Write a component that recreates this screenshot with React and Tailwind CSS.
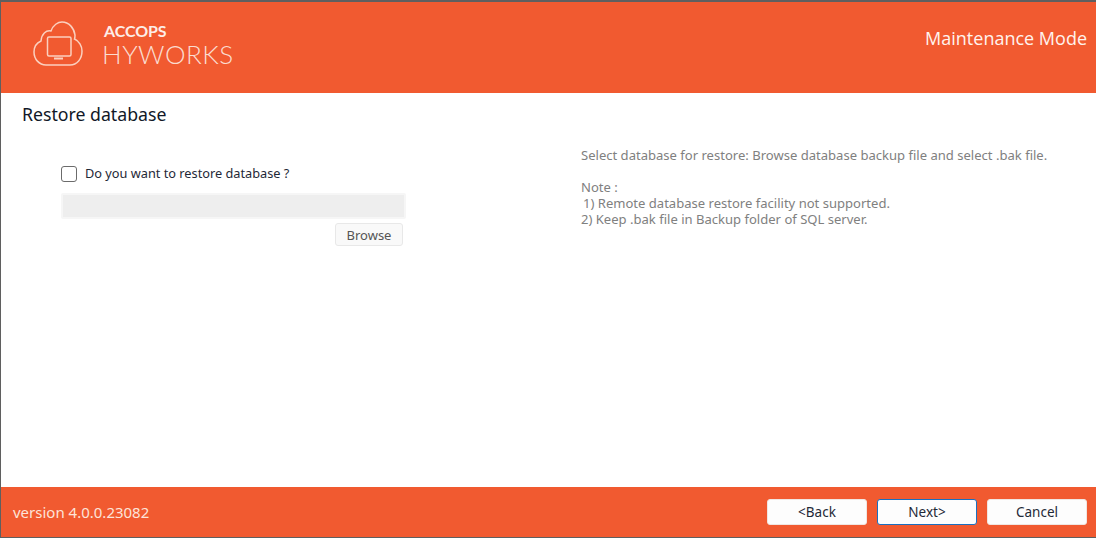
const Logo = () => (
  <svg width="50" height="46" viewBox="0 0 50 46" fill="none" stroke="#fbd0bf" strokeWidth="1.5" className="shrink-0">
    <path d="M13 44C6 44 1 38 1 31C1 26 3.5 22 8 20C8.5 13 13 9 18 10C20 4 25 1 29 1C36 1 41 7 42 14C42 16 42 17 41.5 18C46 20 49 25 49 30C49 38 44 44 37 44Z" />
    <rect x="14.5" y="16" width="23.5" height="19" rx="1.5" />
    <path d="M21 37.5H30" strokeWidth="2" />
  </svg>
);

const FooterButton = ({ label, focused }) => (
  <button
    className={`w-[100px] h-[26px] rounded-[3px] bg-[#fdfdfd] text-[13.5px] leading-[24px] text-[#1f2937] ${
      focused ? "border border-[#1a6fc0]" : "border border-[#f0e6e2]"
    }`}
  >
    {label}
  </button>
);

export default function App() {
  return (
    <div className="w-[1096px] h-[538px] flex flex-col bg-white border border-t-2 border-r-0 border-[#5f5f5f] font-['Noto_Sans',sans-serif] overflow-hidden">
      <header className="h-[91px] shrink-0 flex items-start justify-between bg-[#f15a30]">
        <div className="flex items-start gap-[19px] pl-[32px] pt-[19px]">
          <Logo />
          <div className="flex flex-col font-['Lato',sans-serif] text-[#fdeee8] pt-[1px]">
            <span className="text-[16px] leading-[17px] font-bold tracking-[-0.1px] pl-[2px]">ACCOPS</span>
            <span className="mt-[2px] text-[26px] leading-[26px] font-light tracking-[0.5px] text-[#fbdccf]">HYWORKS</span>
          </div>
        </div>
        <div className="pt-[23px] pr-[9px] text-[18px] leading-[26px] text-[#fff3ee] font-['Open_Sans',sans-serif]">
          Maintenance Mode
        </div>
      </header>

      <main className="flex-1 flex flex-col pl-[21px] pr-[8px]">
        <h1 className="mt-[9px] text-[17.7px] leading-[24px] text-[#111827]">Restore database</h1>
        <div className="flex flex-1">
          <div className="w-[559px] shrink-0 pl-[39px] pt-[38px] flex flex-col">
            <label className="flex items-center gap-[8px] h-[20px]">
              <span className="w-[16px] h-[16px] rounded-[3px] border border-[#6b6b6b] bg-white" />
              <span className="text-[12.75px] text-[#1f2937]">Do you want to restore database ?</span>
            </label>
            <div className="mt-[9px] w-[345px] h-[26px] rounded-[2px] border-2 border-[#f6f6f6] bg-[#eeeeee]" />
            <div className="w-[345px] flex justify-end pr-[3px] mt-[4px]">
              <button className="w-[68px] h-[23px] rounded-[3px] border border-[#e8e8e8] bg-[#f9f9f9] text-[13px] leading-[23px] text-[#555555]">
                Browse
              </button>
            </div>
          </div>
          <div className="pt-[21px] text-[13.05px] leading-[16px] text-[#808080]">
            <p>Select database for restore: Browse database backup file and select .bak file.</p>
            <p className="mt-[16px]">Note :</p>
            <p className="pl-[2px]">1) Remote database restore facility not supported.</p>
            <p>2) Keep .bak file in Backup folder of SQL server.</p>
          </div>
        </div>
      </main>

      <footer className="h-[50px] shrink-0 flex items-center justify-between bg-[#f15a30] pl-[12px] pr-[9px]">
        <span className="text-[15px] text-[#fde3d9]">version 4.0.0.23082</span>
        <div className="flex gap-[10px]">
          <FooterButton label="<Back" />
          <FooterButton label="Next>" focused />
          <FooterButton label="Cancel" />
        </div>
      </footer>
    </div>
  );
}
